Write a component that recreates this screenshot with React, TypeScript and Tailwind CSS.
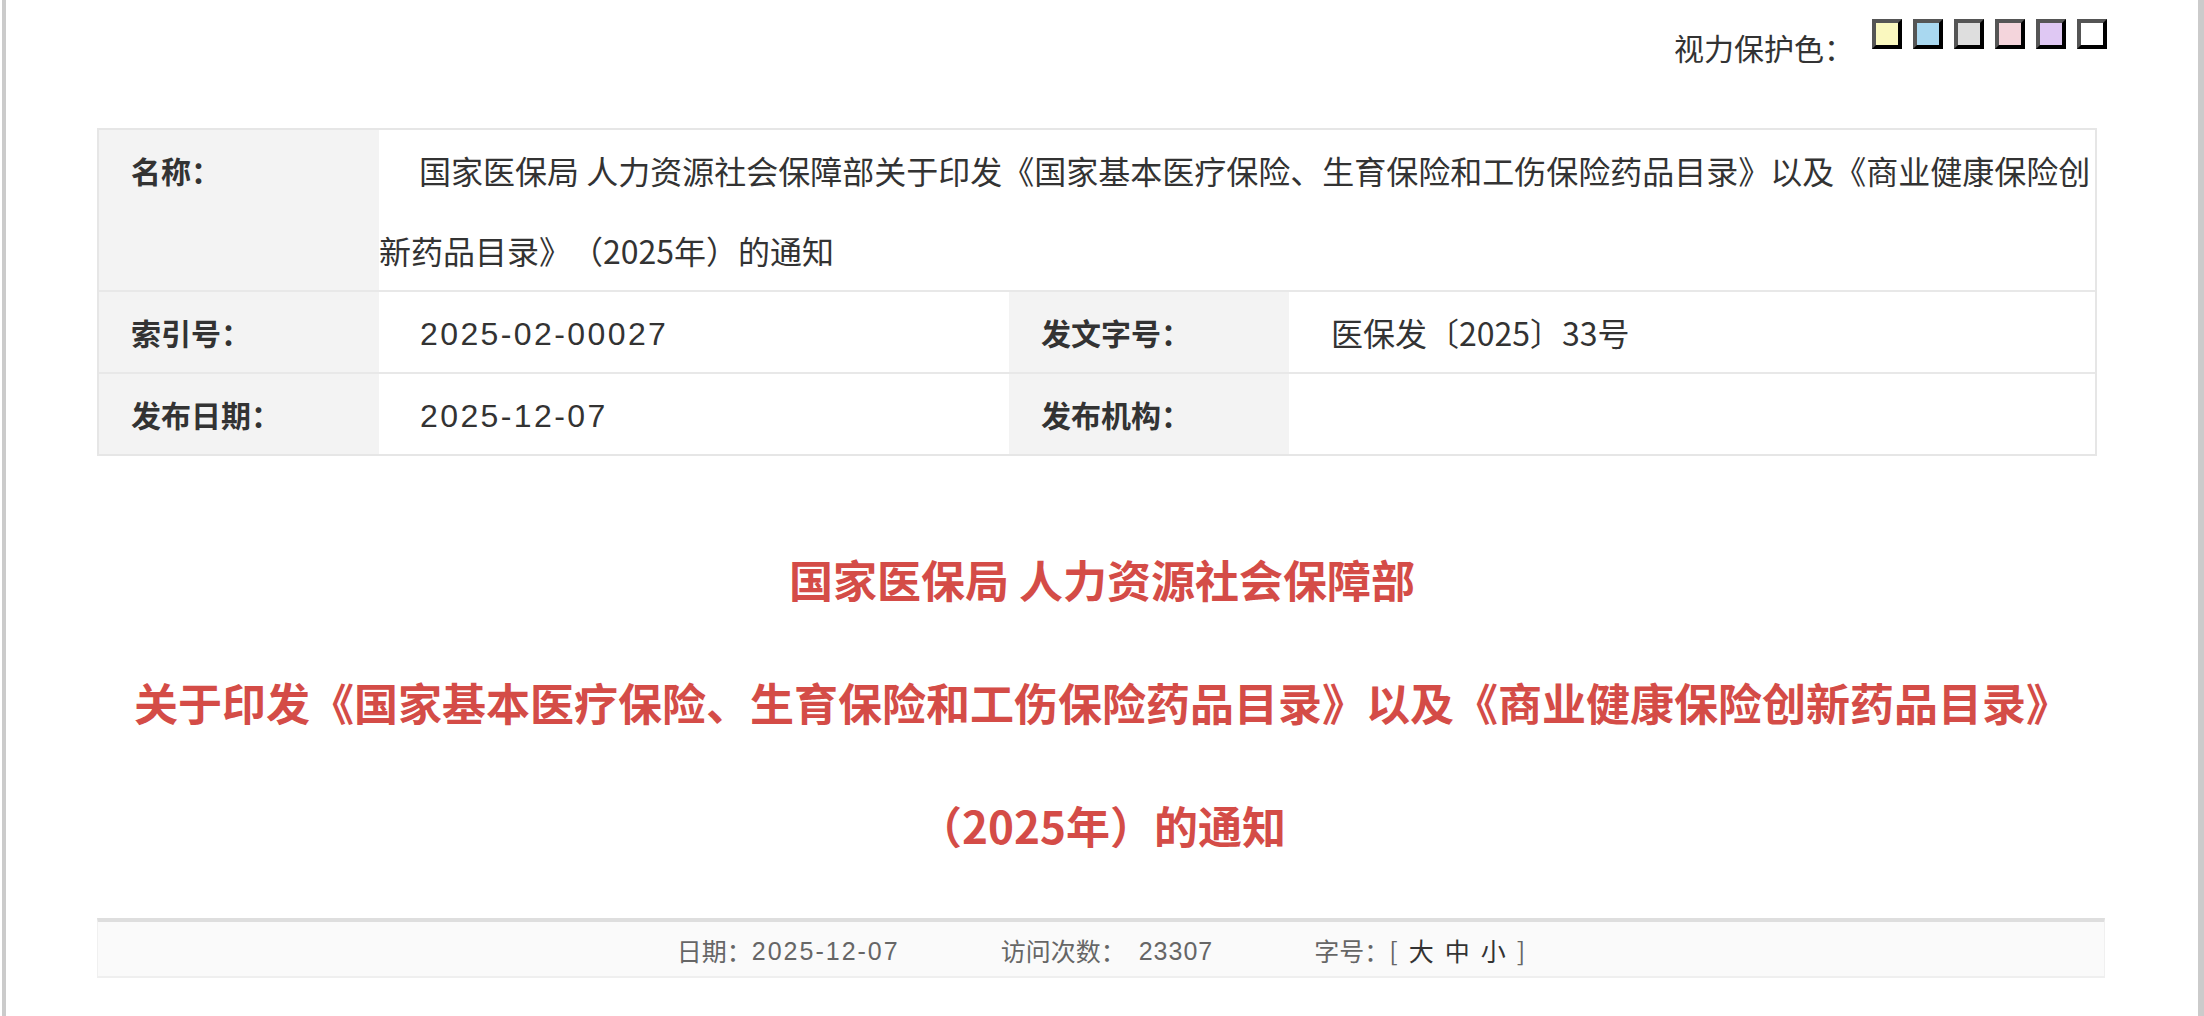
import React from "react";

const swatches = ["#faf8bf", "#a9d8f0", "#dedede", "#f4d5dc", "#dfc8f3", "#ffffff"];

const font = { fontFamily: '"Noto Sans CJK SC", "Liberation Sans", sans-serif' };

export default function App() {
  return (
    <div className="min-h-screen bg-white pl-[2px] [text-spacing-trim:space-all]" style={font}>
      <div className="min-h-screen border-l-4 border-r-[6px] border-[#cbcbcb] bg-white">
        <div className="ml-[91px] w-[2010px]">
          {/* 视力保护色 */}
          <div className="flex h-[128px] items-start justify-end pt-[19px]">
            <span className="mt-[13px] mr-[18px] text-[30px] leading-[30px] text-[#333]">视力保护色：</span>
            <div className="flex gap-[11px]">
              {swatches.map((c) => (
                <button
                  key={c}
                  className="h-[30px] w-[30px] border-4 border-t-[#555] border-l-[#555] border-b-black border-r-black"
                  style={{ backgroundColor: c }}
                />
              ))}
            </div>
          </div>

          {/* 信息表 */}
          <div className="w-[2000px] border-2 border-[#e6e6e6] text-[#333]">
            <div className="flex border-b-2 border-[#e8e8e8]">
              <div className="w-[280px] shrink-0 bg-[#f3f3f3] pl-[32px] text-[30px] font-bold leading-[80px]">名称：</div>
              <div className="flex-1 indent-[40px] text-[32px] leading-[80px]">
                国家医保局 人力资源社会保障部关于印发《国家基本医疗保险、生育保险和工伤保险药品目录》以及《商业健康保险创新药品目录》（2025年）的通知
              </div>
            </div>
            <div className="flex h-[82px] border-b-2 border-[#e8e8e8]">
              <div className="w-[280px] shrink-0 bg-[#f3f3f3] pl-[32px] text-[30px] font-bold leading-[80px]">索引号：</div>
              <div className="flex w-[630px] shrink-0 items-center pl-[41px] pt-[3px] text-[32px]">
                <span className="font-['Liberation_Sans'] leading-none tracking-[2.4px]">2025-02-00027</span>
              </div>
              <div className="w-[280px] shrink-0 bg-[#f3f3f3] pl-[32px] text-[30px] font-bold leading-[80px]">发文字号：</div>
              <div className="flex-1 pl-[42px] text-[32px] leading-[80px]">医保发〔2025〕33号</div>
            </div>
            <div className="flex h-[80px]">
              <div className="w-[280px] shrink-0 bg-[#f3f3f3] pl-[32px] text-[30px] font-bold leading-[80px]">发布日期：</div>
              <div className="flex w-[630px] shrink-0 items-center pl-[41px] pt-[3px] text-[32px]">
                <span className="font-['Liberation_Sans'] leading-none tracking-[2.4px]">2025-12-07</span>
              </div>
              <div className="w-[280px] shrink-0 bg-[#f3f3f3] pl-[32px] text-[30px] font-bold leading-[80px]">发布机构：</div>
              <div className="flex-1 pl-[42px] text-[32px] leading-[80px]"></div>
            </div>
          </div>

          {/* 标题 */}
          <div className="mt-[62px] mb-[31px] text-center text-[44px] font-bold leading-[123px] text-[#d44c47]">
            <div>国家医保局 人力资源社会保障部</div>
            <div>关于印发《国家基本医疗保险、生育保险和工伤保险药品目录》以及《商业健康保险创新药品目录》</div>
            <div>（2025年）的通知</div>
          </div>

          {/* 底部信息 */}
          <div className="w-[2008px] border-t-4 border-b-2 border-x border-t-[#dedede] border-b-[#efefef] border-x-[#f0f0f0] bg-[#fafafa]">
            <div className="flex h-[54px] items-center justify-center gap-[101px] pt-[4px] text-[25px] text-[#666]">
              <span className="flex items-center">
                <span>日期：</span>
                <span className="font-['Liberation_Sans'] leading-none tracking-[2px]">2025-12-07</span>
              </span>
              <span className="flex items-center">
                <span>访问次数：</span>
                <span className="ml-[13px] font-['Liberation_Sans'] leading-none tracking-[1px]">23307</span>
              </span>
              <span className="flex items-center">
                <span>字号：</span>
                <span className="flex gap-[11px]">
                  <span>[</span>
                  <span className="cursor-pointer text-[#333]">大</span>
                  <span className="cursor-pointer text-[#333]">中</span>
                  <span className="cursor-pointer text-[#333]">小</span>
                  <span>]</span>
                </span>
              </span>
            </div>
          </div>
        </div>
      </div>
    </div>
  );
}
